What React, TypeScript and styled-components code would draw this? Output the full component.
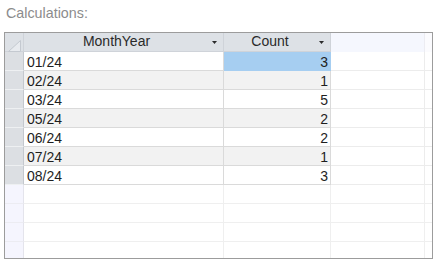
import React from "react";
import styled, { createGlobalStyle } from "styled-components";

const Global = createGlobalStyle`
  html, body { margin: 0; padding: 0; background: #ffffff; }
  body { font-family: "Liberation Sans", Arial, sans-serif; }
`;

const Page = styled.div`
  width: 443px;
  height: 269px;
  overflow: hidden;
`;

const Title = styled.div`
  padding: 5px 0 0 6px;
  height: 27px;
  line-height: 16px;
  font-size: 14.3px;
  color: #8c8c8c;
`;

const Grid = styled.div`
  margin-left: 4px;
  width: 429px;
  height: 227px;
  box-sizing: border-box;
  border: 1px solid #9c9c9c;
  overflow: hidden;
  display: grid;
  grid-template-columns: 19px 200px 107px 94px 7px;
  grid-auto-rows: 19px;
  font-size: 14px;
  color: #1e1e1e;
`;

const Cell = styled.div<{ $bg?: string; $line?: string; $align?: "left" | "right"; $last?: boolean }>`
  box-sizing: border-box;
  background: ${(p) => p.$bg ?? "#ffffff"};
  border-right: ${(p) => (p.$last ? "none" : `1px solid ${p.$line ?? "#dadada"}`)};
  border-bottom: 1px solid ${(p) => p.$line ?? "#dadada"};
  line-height: 20px;
  padding: 0 ${(p) => (p.$align === "right" ? "2px" : "0")} 0 ${(p) => (p.$align === "left" ? "3px" : "0")};
  text-align: ${(p) => p.$align ?? "left"};
  white-space: nowrap;
  overflow: hidden;
`;

const HeadCell = styled.div`
  box-sizing: border-box;
  background: #dde1e6;
  border-right: 1px solid #cfd3d9;
  border-bottom: 1px solid #cfd3d9;
  display: flex;
  align-items: flex-start;
  line-height: 16px;
  color: #2a2a2a;
  overflow: hidden;
`;

const FillerHead = styled.div<{ $last?: boolean }>`
  box-sizing: border-box;
  background: ${(p) => (p.$last ? "#fbfbfe" : "#f5f7fe")};
  border-right: ${(p) => (p.$last ? "none" : "1px solid #ececf2")};
`;

const HeadLabel = styled.span`
  flex: 1;
  text-align: center;
`;

const ArrowBox = styled.span`
  width: 14px;
  padding: 8px 0 0 3px;
  box-sizing: border-box;
  display: flex;
`;

const RowHead = styled.div<{ $empty?: boolean }>`
  box-sizing: border-box;
  background: ${(p) => (p.$empty ? "#f5f5fe" : "#dcdfe3")};
  border-right: 1px solid ${(p) => (p.$empty ? "#e4e4ec" : "#c4c8ce")};
  border-bottom: 1px solid ${(p) => (p.$empty ? "#ececf2" : "#eef0f2")};
`;

const Corner = styled.div`
  box-sizing: border-box;
  background: #dde1e6;
  border-right: 1px solid #cfd3d9;
  border-bottom: 1px solid #cfd3d9;
  padding: 6px 0 0 3px;
`;

const DropArrow = () => (
  <svg width="5" height="3" viewBox="0 0 5 3">
    <polygon points="0,0 5,0 2.5,3" fill="#2b2b2b" />
  </svg>
);

const SelectAll = () => (
  <svg width="13" height="12" viewBox="0 0 13 12">
    <polygon points="0.5,11.5 12.5,0.5 12.5,11.5" fill="#e8ebef" stroke="#c4c9d0" strokeWidth="1" />
  </svg>
);

const rows: [string, number][] = [
  ["01/24", 3],
  ["02/24", 1],
  ["03/24", 5],
  ["05/24", 2],
  ["06/24", 2],
  ["07/24", 1],
  ["08/24", 3],
];

export default function App() {
  return (
    <Page>
      <Global />
      <Title>Calculations:</Title>
      <Grid>
        <Corner>
          <SelectAll />
        </Corner>
        <HeadCell>
          <HeadLabel>MonthYear</HeadLabel>
          <ArrowBox>
            <DropArrow />
          </ArrowBox>
        </HeadCell>
        <HeadCell>
          <HeadLabel>Count</HeadLabel>
          <ArrowBox>
            <DropArrow />
          </ArrowBox>
        </HeadCell>
        <FillerHead />
        <FillerHead $last />
        {rows.map(([m, c], i) => {
          const alt = i % 2 === 1;
          const bg = alt ? "#f2f2f2" : "#ffffff";
          return (
            <React.Fragment key={m}>
              <RowHead />
              <Cell $bg={bg} $align="left">
                {m}
              </Cell>
              <Cell $bg={i === 0 ? "#a6cef1" : bg} $line={i === 0 ? "#a6cef1" : undefined} $align="right">
                {c}
              </Cell>
              <Cell $line="#ececec" />
              <Cell $line="#ececec" $last />
            </React.Fragment>
          );
        })}
        {[0, 1, 2, 3].map((k) => (
          <React.Fragment key={"e" + k}>
            <RowHead $empty />
            <Cell $line="#efefef" />
            <Cell $line="#efefef" />
            <Cell $line="#efefef" />
            <Cell $line="#efefef" $last />
          </React.Fragment>
        ))}
      </Grid>
    </Page>
  );
}
